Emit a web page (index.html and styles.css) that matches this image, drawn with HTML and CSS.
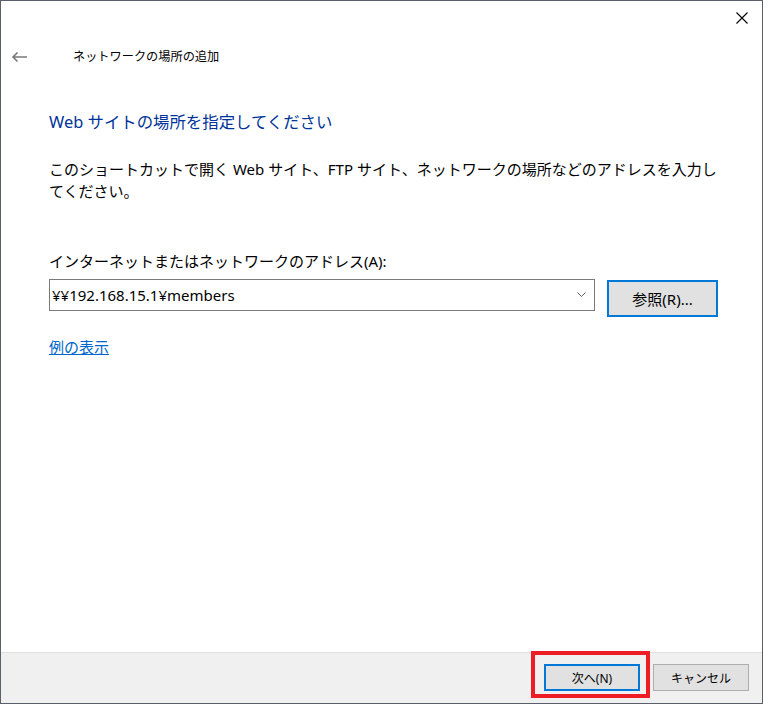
FILE: index.html
```html
<!DOCTYPE html>
<html lang="ja">
<head>
<meta charset="utf-8">
<title>ネットワークの場所の追加</title>
<link rel="stylesheet" href="styles.css">
</head>
<body>
<div class="window">
  <div class="topbar">
    <button class="close" aria-label="閉じる">
      <svg width="12" height="12" viewBox="0 0 12 12"><path d="M0.5 0.5 L11.5 11.5 M11.5 0.5 L0.5 11.5" stroke="#000" stroke-width="1.1" fill="none"/></svg>
    </button>
  </div>
  <div class="navrow">
    <span class="back">
      <svg width="17" height="12" viewBox="0 0 17 12"><path d="M16 6 H2 M6.5 1.5 L2 6 L6.5 10.5" stroke="#7a7a7a" stroke-width="1.6" fill="none"/></svg>
    </span>
    <span class="wintitle">ネットワークの場所の追加</span>
  </div>
  <main class="content">
    <h1 class="heading">Web サイトの場所を指定してください</h1>
    <p class="desc">このショートカットで開く Web サイト、FTP サイト、ネットワークの場所などのアドレスを入力してください。</p>
    <div class="label">インターネットまたはネットワークのアドレス(A):</div>
    <div class="fieldrow">
      <div class="combo">
        <span class="value">¥¥192.168.15.1¥members</span>
        <svg class="chev" width="9" height="6" viewBox="0 0 9 6"><path d="M0.5 0.5 L4.5 4.5 L8.5 0.5" stroke="#606060" stroke-width="1" fill="none"/></svg>
      </div>
      <button class="btn browse">参照(R)...</button>
    </div>
    <a class="link" href="#">例の表示</a>
  </main>
  <footer class="footer">
    <div class="nextwrap">
      <button class="btn small primary">次へ(N)</button>
      <span class="highlight"></span>
    </div>
    <button class="btn small">キャンセル</button>
  </footer>
</div>
</body>
</html>
```
FILE: styles.css
```css
* { box-sizing: border-box; }
html, body { margin: 0; padding: 0; background: #fff; }
body {
  font-family: "Noto Sans", "Noto Sans CJK JP", sans-serif;
  color: #000;
}
.window {
  width: 763px;
  height: 704px;
  border: 1px solid #58606a;
  background: #fff;
  display: flex;
  flex-direction: column;
}
.topbar {
  height: 36px;
  display: flex;
  justify-content: flex-end;
}
.close {
  width: 40px;
  height: 34px;
  border: 0;
  background: transparent;
  padding: 0;
  display: flex;
  align-items: center;
  justify-content: center;
}
.navrow {
  height: 40px;
  display: flex;
  align-items: center;
  padding-left: 10px;
}
.back {
  width: 62px;
  display: flex;
  align-items: center;
}
.back svg { display: block; }
.wintitle {
  font-size: 12.2px;
  line-height: 16px;
}
.content {
  flex: 1;
  padding-left: 48px;
  padding-right: 30px;
}
.heading {
  margin: 33px 0 0;
  font-weight: normal;
  font-size: 16.4px;
  line-height: 24px;
  color: #003399;
}
.desc {
  margin: 24px 0 0;
  font-size: 15px;
  line-height: 22px;
  width: 676px;
}
.label {
  margin-top: 48px;
  font-size: 15px;
  line-height: 22px;
}
.fieldrow {
  margin-top: 7px;
  display: flex;
  align-items: flex-start;
  gap: 12px;
}
.combo {
  width: 546px;
  height: 32px;
  border: 1px solid #7a7a7a;
  display: flex;
  align-items: center;
  justify-content: space-between;
  padding: 0 8px 0 2px;
}
.value {
  font-size: 15px;
  line-height: 20px;
}
.chev { display: block; }
.btn {
  font-family: "Noto Sans", "Noto Sans CJK JP", sans-serif;
  background: #e1e1e1;
  border: 1px solid #adadad;
  color: #000;
  padding: 0;
}
.browse {
  margin-top: 1px;
  width: 111px;
  height: 37px;
  border: 2px solid #0078d7;
  font-size: 15px;
}
.link {
  display: inline-block;
  margin-top: 19px;
  font-size: 15px;
  line-height: 22px;
  color: #0066cc;
  text-decoration: underline;
}
.footer {
  height: 51px;
  background: #f0f0f0;
  border-top: 1px solid #dfdfdf;
  display: flex;
  justify-content: flex-end;
  align-items: flex-start;
  padding: 11px 13px 0 0;
  gap: 13px;
}
.small {
  width: 96px;
  height: 27px;
  font-size: 12px;
}
.primary {
  border: 2px solid #0078d7;
}
.nextwrap {
  position: relative;
}
.nextwrap .btn { display: block; }
.highlight {
  position: absolute;
  left: -13px;
  right: -10px;
  top: -13px;
  bottom: -7px;
  border: 4px solid #ee1c25;
  pointer-events: none;
}
```
